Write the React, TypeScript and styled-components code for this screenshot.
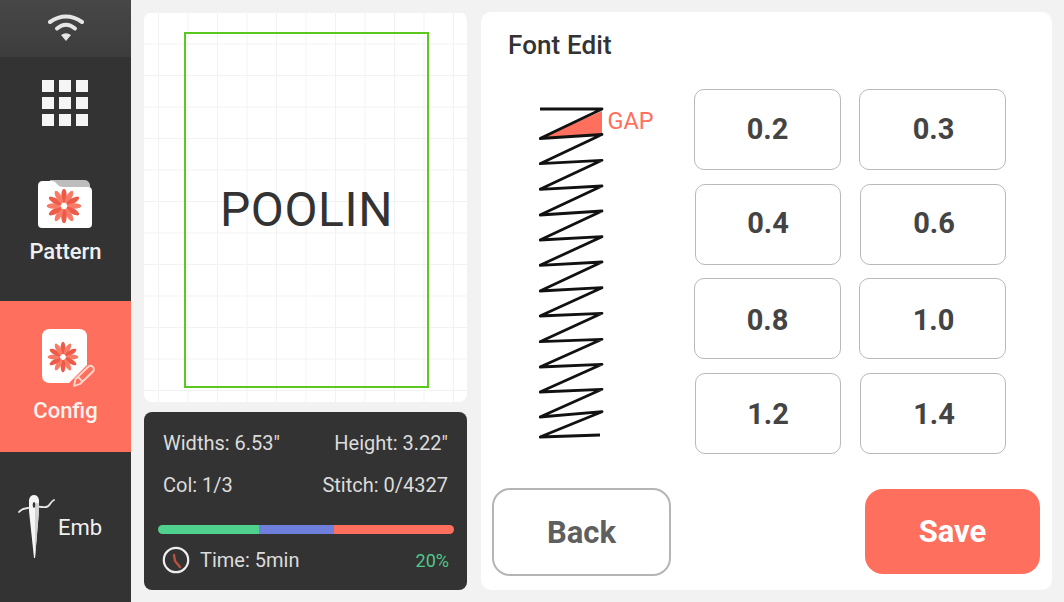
import React from 'react';
import styled, { createGlobalStyle } from 'styled-components';

const GlobalStyle = createGlobalStyle`
  html, body {
    margin: 0;
    padding: 0;
    background: #f2f2f2;
    font-family: Roboto, "Liberation Sans", sans-serif;
  }
  * {
    box-sizing: border-box;
  }
`;

const Shell = styled.div`
  width: 1064px;
  height: 602px;
  display: flex;
  overflow: hidden;
  background: #f2f2f2;
`;

const Sidebar = styled.nav`
  width: 131px;
  flex: none;
  display: flex;
  flex-direction: column;
  background: #333333;
`;

const StatusBar = styled.div`
  height: 57px;
  display: flex;
  justify-content: center;
  padding-top: 12px;
  background: linear-gradient(#474747, #3d3d3d);
`;

const GridButton = styled.div`
  height: 92px;
  display: flex;
  align-items: center;
  justify-content: center;
  padding-right: 1px;
`;

const NavItem = styled.div<{ $active?: boolean; $height: number; $top: number }>`
  height: ${p => p.$height}px;
  padding-top: ${p => p.$top}px;
  display: flex;
  flex-direction: column;
  align-items: center;
  background: ${p => (p.$active ? '#ff6f5e' : 'transparent')};
  color: ${p => (p.$active ? '#fff3ee' : '#f0f0f0')};
`;

const NavLabel = styled.span<{ $top: number }>`
  font-size: 22px;
  font-weight: 500;
  line-height: 26px;
  margin-top: ${p => p.$top}px;
`;

const EmbItem = styled.div`
  flex: 1;
  display: flex;
  align-items: center;
  padding-left: 15px;
  color: #f0f0f0;
  font-size: 22px;
  font-weight: 400;
`;

const Main = styled.main`
  flex: 1;
  display: flex;
  gap: 14px;
  padding: 12px 12px 12px 13px;
`;

const LeftColumn = styled.section`
  width: 323px;
  display: flex;
  flex-direction: column;
  gap: 10px;
`;

const Canvas = styled.div`
  height: 390px;
  display: flex;
  justify-content: center;
  padding: 20px 0 0 2px;
  border-radius: 8px;
  background-color: #ffffff;
  background-image:
    linear-gradient(to right, #f2f2f2 1px, transparent 1px),
    linear-gradient(to bottom, #f2f2f2 1px, transparent 1px);
  background-size: 29.5px 31.5px;
  background-position: 14px 0;
`;

const Hoop = styled.div`
  width: 245px;
  height: 356px;
  display: flex;
  align-items: center;
  justify-content: center;
  padding-bottom: 2px;
  border: 2px solid #5ac81e;
  color: #333333;
  font-size: 48px;
  letter-spacing: 0.6px;
`;

const InfoPanel = styled.div`
  flex: 1;
  display: flex;
  flex-direction: column;
  padding: 19px 13px 0 14px;
  border-radius: 8px;
  background: #333333;
  color: #dcdcdc;
  font-size: 20px;
`;

const InfoRow = styled.div<{ $gap?: number }>`
  display: flex;
  justify-content: space-between;
  align-items: center;
  height: 24px;
  padding: 0 6px 0 5px;
  margin-bottom: ${p => p.$gap ?? 0}px;
`;

const ProgressBar = styled.div`
  height: 9px;
  display: flex;
  overflow: hidden;
  border-radius: 5px;
  margin: 5px 0 12px;
`;

const ProgressPart = styled.div<{ $color: string; $width?: number }>`
  background: ${p => p.$color};
  ${p => (p.$width ? `width: ${p.$width}px;` : 'flex: 1;')}
`;

const TimeRow = styled.div`
  display: flex;
  align-items: center;
  height: 28px;
  padding: 0 5px 0 4px;
`;

const TimeLabel = styled.span`
  flex: 1;
  margin-left: 10px;
`;

const Percent = styled.span`
  color: #4fc98a;
  font-size: 18px;
`;

const EditPanel = styled.section`
  flex: 1;
  display: flex;
  flex-direction: column;
  border-radius: 10px;
  background: #ffffff;
  padding: 19px 12px 14px 11px;
`;

const PanelTitle = styled.h2`
  margin: 0 0 0 16px;
  height: 29px;
  line-height: 29px;
  color: #333333;
  font-size: 26px;
  font-weight: 500;
  letter-spacing: 0.1px;
`;

const EditBody = styled.div`
  flex: 1;
  display: flex;
  padding-top: 29px;
`;

const StitchBox = styled.div`
  width: 202px;
  flex: none;
  padding: 15px 0 0 47px;
`;

const OptionGrid = styled.div`
  display: grid;
  grid-template-columns: 147px 147px;
  grid-auto-rows: 81px;
  column-gap: 18px;
  row-gap: 13.67px;
`;

const OptionButton = styled.button<{ $shift?: boolean }>`
  margin-left: ${p => (p.$shift ? 1 : 0)}px;
  padding: 0 0 2px;
  border: 1px solid #b9b9b9;
  border-radius: 10px;
  background: #ffffff;
  color: #444444;
  font-family: inherit;
  font-size: 29px;
  font-weight: 700;

  &:nth-child(even) {
    padding-left: 2px;
  }
  &:nth-child(n + 5) {
    padding-top: 2px;
    padding-bottom: 0;
  }
`;

const Footer = styled.div`
  display: flex;
  justify-content: space-between;
  align-items: flex-start;
`;

const ActionButton = styled.button<{ $primary?: boolean }>`
  width: ${p => (p.$primary ? 175 : 179)}px;
  height: ${p => (p.$primary ? 85 : 88)}px;
  margin-top: ${p => (p.$primary ? 1 : 0)}px;
  border: ${p => (p.$primary ? 'none' : '2px solid #b5b5b5')};
  border-radius: 18px;
  background: ${p => (p.$primary ? '#ff6f5e' : '#ffffff')};
  color: ${p => (p.$primary ? '#ffffff' : '#5f5f5f')};
  font-family: inherit;
  font-size: 31px;
  font-weight: 700;
`;

const Flower = ({ x, y, r }: { x: number; y: number; r: number }) => (
  <g transform={`translate(${x} ${y})`}>
    {Array.from({ length: 12 }).map((_, i) => (
      <ellipse
        key={i}
        cx={0}
        cy={-r * 0.6}
        rx={r * 0.16}
        ry={r * 0.42}
        fill={i % 2 ? '#f77b66' : '#ee5a48'}
        transform={`rotate(${i * 30})`}
      />
    ))}
    <circle r={r * 0.14} fill="#ffffff" />
  </g>
);

const WifiIcon = () => (
  <svg width="40" height="32" viewBox="0 0 40 32">
    <path d="M4 10 Q20 -1 36 10" fill="none" stroke="#e6e6e6" strokeWidth="4" strokeLinecap="round" />
    <path d="M11 16.5 Q20 9 29 16.5" fill="none" stroke="#e6e6e6" strokeWidth="4" strokeLinecap="round" />
    <path d="M15 23 Q20 19.5 25 23 L20 29 Z" fill="#e6e6e6" />
  </svg>
);

const AppsIcon = () => (
  <svg width="46" height="46" viewBox="0 0 46 46">
    {[0, 17, 34].map(y =>
      [0, 17, 34].map(x => <rect key={`${x}-${y}`} x={x} y={y} width="12" height="12" fill="#f5f5f5" />)
    )}
  </svg>
);

const FolderIcon = () => (
  <svg width="54" height="49" viewBox="0 0 54 49" style={{ marginLeft: -2 }}>
    <path d="M12 0 H46 Q51 0 52 5 V14 H12 Z" fill="#bdbdbd" />
    <path
      d="M0 6 Q0 1 5 1 H14 Q17 1 19 4 Q21 7 25 7 H50 Q54 7 54 11 V44 Q54 48 50 48 H4 Q0 48 0 44 Z"
      fill="#ffffff"
    />
    <Flower x={26} y={26} r={17} />
  </svg>
);

const ConfigIcon = () => (
  <svg width="54" height="60" viewBox="0 0 54 60" style={{ marginLeft: 6 }}>
    <path
      d="M8 0 H37 Q45 0 45 8 V36 L27 54 H8 Q0 54 0 46 V8 Q0 0 8 0 Z"
      fill="#ffffff"
    />
    <Flower x={21} y={28} r={15} />
    <path
      d="M32 57 L33.5 50 L46 38 Q49 35.5 51 38 Q53 40.5 50.5 43 L38 55 Z M36 48 L41 53"
      fill="none"
      stroke="#ffd9d0"
      strokeWidth="1.8"
      strokeLinejoin="round"
    />
  </svg>
);

const NeedleIcon = () => (
  <svg width="43" height="64" viewBox="0 0 43 64">
    <path
      d="M4 17 Q6 14 13 13 Q20 11 27 12 Q33 13 35 9 Q37 6 39 5"
      fill="none"
      stroke="#e8e8e8"
      strokeWidth="1.8"
      strokeLinecap="round"
    />
    <path d="M14 5 Q15 0 19 0 Q23 0 24 5 L24 16 L20 63 H19 L14 16 Z" fill="#f5f5f5" />
    <path d="M20 8 V63 L24 16 V8 Z" fill="#d2d2d2" />
    <ellipse cx="19" cy="10" rx="1.3" ry="3" fill="#333333" />
  </svg>
);

const ClockIcon = () => (
  <svg width="28" height="28" viewBox="0 0 28 28">
    <circle cx="14" cy="14" r="12.2" fill="none" stroke="#eeeeee" strokeWidth="2.2" />
    <path d="M12 9 L13 15 L18 21" fill="none" stroke="#b8503f" strokeWidth="2.4" strokeLinecap="round" />
  </svg>
);

const StitchDiagram = () => {
  const points = [
    [1, 5], [63, 5], [1, 34.5], [63, 30.5], [1, 59.7], [63, 56.3], [1, 85.3], [63, 82],
    [1, 111], [63, 107], [1, 136], [63, 132.7], [1, 161.3], [63, 158], [1, 187], [63, 183.7],
    [1, 212], [63, 209.3], [1, 237.7], [63, 235.3], [1, 263], [63, 260.3], [1, 288], [63, 285.3],
    [1, 313], [63, 307.7], [1, 333], [61, 331],
  ];
  return (
    <svg width="130" height="340" viewBox="0 0 130 340">
      <polygon points="1,34.5 63,7 63,30.5" fill="#ff6f5e" />
      <polyline
        points={points.map(p => p.join(',')).join(' ')}
        fill="none"
        stroke="#111111"
        strokeWidth="2.8"
        strokeLinejoin="round"
      />
      <text x="68.5" y="25" fontSize="23.5" fill="#ff6f5e" fontFamily="Roboto, sans-serif">
        GAP
      </text>
    </svg>
  );
};

const gaps = ['0.2', '0.3', '0.4', '0.6', '0.8', '1.0', '1.2', '1.4'];

const App = () => {
  return (
    <Shell>
      <GlobalStyle />
      <Sidebar>
        <StatusBar>
          <WifiIcon />
        </StatusBar>
        <GridButton>
          <AppsIcon />
        </GridButton>
        <NavItem $height={152} $top={31}>
          <FolderIcon />
          <NavLabel $top={10}>Pattern</NavLabel>
        </NavItem>
        <NavItem $active $height={151} $top={28}>
          <ConfigIcon />
          <NavLabel $top={9}>Config</NavLabel>
        </NavItem>
        <EmbItem>
          <NeedleIcon />
          Emb
        </EmbItem>
      </Sidebar>
      <Main>
        <LeftColumn>
          <Canvas>
            <Hoop>POOLIN</Hoop>
          </Canvas>
          <InfoPanel>
            <InfoRow $gap={18}>
              <span>Widths: 6.53"</span>
              <span>Height: 3.22"</span>
            </InfoRow>
            <InfoRow $gap={23}>
              <span>Col: 1/3</span>
              <span>Stitch: 0/4327</span>
            </InfoRow>
            <ProgressBar>
              <ProgressPart $color="#4ed28e" $width={101} />
              <ProgressPart $color="#6f7fdc" $width={75} />
              <ProgressPart $color="#ff6f5e" />
            </ProgressBar>
            <TimeRow>
              <ClockIcon />
              <TimeLabel>Time: 5min</TimeLabel>
              <Percent>20%</Percent>
            </TimeRow>
          </InfoPanel>
        </LeftColumn>
        <EditPanel>
          <PanelTitle>Font Edit</PanelTitle>
          <EditBody>
            <StitchBox>
              <StitchDiagram />
            </StitchBox>
            <OptionGrid>
              {gaps.map((g, i) => (
                <OptionButton key={g} $shift={Math.floor(i / 2) % 2 === 1}>
                  {g}
                </OptionButton>
              ))}
            </OptionGrid>
          </EditBody>
          <Footer>
            <ActionButton>Back</ActionButton>
            <ActionButton $primary>Save</ActionButton>
          </Footer>
        </EditPanel>
      </Main>
    </Shell>
  );
};

export default App;
